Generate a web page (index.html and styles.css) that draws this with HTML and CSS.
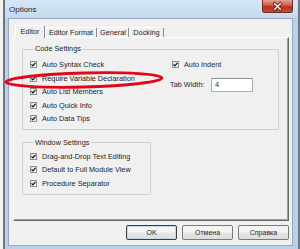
FILE: index.html
```html
<!DOCTYPE html>
<html lang="en">
<head>
    <meta charset="UTF-8">
    <title>Options</title>
    <link rel="stylesheet" href="styles.css">
</head>
<body>
    <div class="window">
        <div class="titlebar">
            <span class="title">Options</span>
            <span class="close">
                <svg width="31" height="13" viewBox="0 0 31 13">
                    <path d="M12.5 3.5 L18.5 9.5 M18.5 3.5 L12.5 9.5" stroke="#5b2018" stroke-width="3.2" stroke-linecap="square"/>
                    <path d="M12.5 3.5 L18.5 9.5 M18.5 3.5 L12.5 9.5" stroke="#ffffff" stroke-width="1.5" stroke-linecap="square"/>
                </svg>
            </span>
        </div>

        <div class="client">
            <div class="tabs">
                <span class="tab active" style="width: 30px">Editor</span>
                <span class="tab" style="width: 52px">Editor Format</span>
                <span class="tab" style="width: 32px">General</span>
                <span class="tab" style="width: 35px">Docking</span>
            </div>

            <div class="panel">
                <fieldset class="group code-group">
                    <legend>Code Settings</legend>
                    <div class="cols">
                        <div class="col">
                            <label class="check"><span class="box"><svg width="5" height="5" viewBox="0 0 5 5"><path d="M0.5 2.3 L1.9 3.8 L4.5 0.8" fill="none" stroke="#111" stroke-width="1.2"/></svg></span>Auto Syntax Check</label>
                            <label class="check"><span class="box"><svg width="5" height="5" viewBox="0 0 5 5"><path d="M0.5 2.3 L1.9 3.8 L4.5 0.8" fill="none" stroke="#111" stroke-width="1.2"/></svg></span>Require Variable Declaration</label>
                            <label class="check"><span class="box"><svg width="5" height="5" viewBox="0 0 5 5"><path d="M0.5 2.3 L1.9 3.8 L4.5 0.8" fill="none" stroke="#111" stroke-width="1.2"/></svg></span>Auto List Members</label>
                            <label class="check"><span class="box"><svg width="5" height="5" viewBox="0 0 5 5"><path d="M0.5 2.3 L1.9 3.8 L4.5 0.8" fill="none" stroke="#111" stroke-width="1.2"/></svg></span>Auto Quick Info</label>
                            <label class="check"><span class="box"><svg width="5" height="5" viewBox="0 0 5 5"><path d="M0.5 2.3 L1.9 3.8 L4.5 0.8" fill="none" stroke="#111" stroke-width="1.2"/></svg></span>Auto Data Tips</label>
                        </div>
                        <div class="col side">
                            <label class="check indent"><span class="box"><svg width="5" height="5" viewBox="0 0 5 5"><path d="M0.5 2.3 L1.9 3.8 L4.5 0.8" fill="none" stroke="#111" stroke-width="1.2"/></svg></span>Auto Indent</label>
                            <div class="field">
                                <span class="field-label">Tab Width:</span>
                                <span class="input">4</span>
                            </div>
                        </div>
                    </div>
                </fieldset>

                <fieldset class="group window-group">
                    <legend>Window Settings</legend>
                    <label class="check"><span class="box"><svg width="5" height="5" viewBox="0 0 5 5"><path d="M0.5 2.3 L1.9 3.8 L4.5 0.8" fill="none" stroke="#111" stroke-width="1.2"/></svg></span>Drag-and-Drop Text Editing</label>
                    <label class="check"><span class="box"><svg width="5" height="5" viewBox="0 0 5 5"><path d="M0.5 2.3 L1.9 3.8 L4.5 0.8" fill="none" stroke="#111" stroke-width="1.2"/></svg></span>Default to Full Module View</label>
                    <label class="check"><span class="box"><svg width="5" height="5" viewBox="0 0 5 5"><path d="M0.5 2.3 L1.9 3.8 L4.5 0.8" fill="none" stroke="#111" stroke-width="1.2"/></svg></span>Procedure Separator</label>
                </fieldset>
            </div>

            <div class="buttons">
                <button class="btn default">OK</button>
                <button class="btn">Отмена</button>
                <button class="btn">Справка</button>
            </div>
        </div>
    </div>

    <!-- red hand-drawn mark over the dialog -->
    <svg class="mark" width="300" height="249" viewBox="0 0 300 249">
        <ellipse cx="84" cy="80" rx="78" ry="7" fill="none" stroke="#e2081c" stroke-width="2.8" transform="rotate(-1.5 84 80)"/>
    </svg>
</body>
</html>
```

FILE: styles.css
```css
* {
    margin: 0;
    padding: 0;
    box-sizing: border-box;
}

body {
    background: #f3f3f3;
    font-family: "Liberation Sans", Arial, sans-serif;
    font-size: 7.3px;
    color: #1e1e1e;
    width: 300px;
    height: 249px;
    overflow: hidden;
}

.window {
    margin-left: 3px;
    width: 297px;
    height: 249px;
    background: #bad1eb;
    border-left: 2px solid #6f7680;
    border-right: 2px solid #6f7680;
    padding-bottom: 3px;
}

.titlebar {
    height: 18px;
    display: flex;
    align-items: flex-start;
    padding-left: 4px;
    background: linear-gradient(#d6e6f7, #c4d9f0);
}

.title {
    font-size: 8px;
    line-height: 8px;
    margin-top: 6px;
    margin-right: auto;
}

.close {
    width: 31px;
    height: 13px;
    margin-right: 5px;
    border: 1px solid #6e2c22;
    border-top: none;
    border-radius: 0 0 3px 3px;
    background: linear-gradient(#e3a195, #cf5a47 45%, #b9311f 55%, #c64a35);
    display: flex;
    align-items: center;
    justify-content: center;
}

.close svg {
    display: block;
}

.client {
    margin: 0 5px 0 3px;
    height: 228px;
    border: 1px solid #98a9bd;
    background: #f0f0f0;
    padding: 6px 3px 0 4px;
}

.tabs {
    display: flex;
    align-items: flex-end;
    height: 12px;
    padding-left: 2px;
}

.tab {
    height: 10px;
    line-height: 9px;
    text-align: center;
    white-space: nowrap;
    border-top: 1px solid #ffffff;
    border-left: 1px solid #ffffff;
    border-right: 1px solid #8a8a8a;
    border-radius: 2px 2px 0 0;
    background: #f0f0f0;
}

.tab.active {
    height: 13px;
    line-height: 11px;
    margin-bottom: -1px;
    position: relative;
    z-index: 1;
}

.panel {
    height: 184px;
    border: 1px solid;
    border-color: #ffffff #696969 #696969 #ffffff;
    box-shadow: inset -1px -1px 0 #a0a0a0;
    padding-left: 8px;
}

.group {
    border: 1px solid #d0d0d0;
    border-radius: 2px;
}

.group legend {
    margin-left: 4px;
    padding: 0 1px;
    line-height: 8px;
}

.code-group {
    width: 257px;
    margin-top: 7px;
    padding: 5px 0 3px 7px;
}

.window-group {
    width: 129px;
    margin-top: 9px;
    padding: 3px 0 4px 7px;
}

.cols {
    display: grid;
    grid-template-columns: 140px 1fr;
}

.check {
    height: 13.5px;
    display: flex;
    align-items: center;
    white-space: nowrap;
}

.box {
    width: 7px;
    height: 7px;
    margin-right: 5px;
    border: 1px solid #8e8f8f;
    background: linear-gradient(135deg, #e2e2e2, #ffffff);
    display: flex;
}

.box svg {
    display: block;
}

.indent {
    padding-left: 2px;
}

.field {
    display: flex;
    align-items: center;
    margin-top: 6px;
}

.field-label {
    width: 41px;
}

.input {
    width: 42px;
    height: 14px;
    line-height: 12px;
    padding-left: 3px;
    background: #ffffff;
    border: 1px solid #abadb3;
    border-top-color: #8e9096;
}

.buttons {
    display: flex;
    justify-content: flex-end;
    gap: 5px;
    margin-top: 4px;
}

.btn {
    width: 51px;
    height: 15px;
    font-family: "Liberation Sans", Arial, sans-serif;
    font-size: 7px;
    color: #1e1e1e;
    border: 1px solid #7a7a7a;
    border-radius: 2px;
    background: linear-gradient(#f4f4f4 45%, #e6e6e6 55%, #dcdcdc);
}

.btn.default {
    border-color: #3d3d3d;
    box-shadow: inset 0 0 0 1px #c9d7e6;
}

.mark {
    position: absolute;
    left: 0;
    top: 0;
    pointer-events: none;
}
```
